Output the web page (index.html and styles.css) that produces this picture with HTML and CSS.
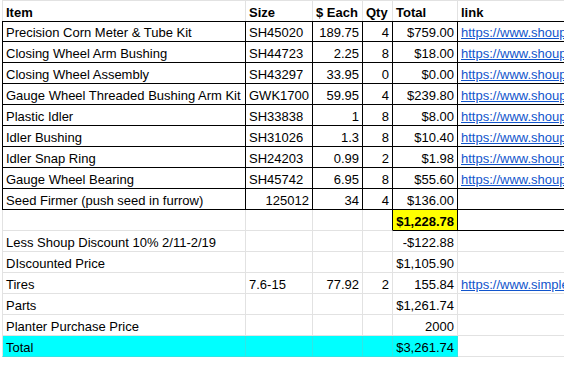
FILE: index.html
```html
<!DOCTYPE html>
<html>
<head>
<meta charset="utf-8">
<link rel="stylesheet" href="styles.css">
</head>
<body>
<div class="sheet">
  <div class="c a hd">Item</div><div class="c hd">Size</div><div class="c hd">$ Each</div><div class="c hd">Qty</div><div class="c hd">Total</div><div class="c f hd">link</div>

  <div class="c a bl bx">Precision Corn Meter &amp; Tube Kit</div><div class="c bx">SH45020</div><div class="c bx num">189.75</div><div class="c bx num">4</div><div class="c bx num">$759.00</div><div class="c f bx"><a href="#">https://www.shoup.com/precision-corn-meter</a></div>
  <div class="c a bl bx">Closing Wheel Arm Bushing</div><div class="c bx">SH44723</div><div class="c bx num">2.25</div><div class="c bx num">8</div><div class="c bx num">$18.00</div><div class="c f bx"><a href="#">https://www.shoup.com/closing-wheel-arm</a></div>
  <div class="c a bl bx">Closing Wheel Assembly</div><div class="c bx">SH43297</div><div class="c bx num">33.95</div><div class="c bx num">0</div><div class="c bx num">$0.00</div><div class="c f bx"><a href="#">https://www.shoup.com/closing-wheel-assembly</a></div>
  <div class="c a bl bx">Gauge Wheel Threaded Bushing Arm Kit</div><div class="c bx">GWK1700</div><div class="c bx num">59.95</div><div class="c bx num">4</div><div class="c bx num">$239.80</div><div class="c f bx"><a href="#">https://www.shoup.com/gauge-wheel-arm-kit</a></div>
  <div class="c a bl bx">Plastic Idler</div><div class="c bx">SH33838</div><div class="c bx num">1</div><div class="c bx num">8</div><div class="c bx num">$8.00</div><div class="c f bx"><a href="#">https://www.shoup.com/plastic-idler</a></div>
  <div class="c a bl bx">Idler Bushing</div><div class="c bx">SH31026</div><div class="c bx num">1.3</div><div class="c bx num">8</div><div class="c bx num">$10.40</div><div class="c f bx"><a href="#">https://www.shoup.com/idler-bushing</a></div>
  <div class="c a bl bx">Idler Snap Ring</div><div class="c bx">SH24203</div><div class="c bx num">0.99</div><div class="c bx num">2</div><div class="c bx num">$1.98</div><div class="c f bx"><a href="#">https://www.shoup.com/idler-snap-ring</a></div>
  <div class="c a bl bx">Gauge Wheel Bearing</div><div class="c bx">SH45742</div><div class="c bx num">6.95</div><div class="c bx num">8</div><div class="c bx num">$55.60</div><div class="c f bx"><a href="#">https://www.shoup.com/gauge-wheel-bearing</a></div>
  <div class="c a bl bx">Seed Firmer (push seed in furrow)</div><div class="c bx num">125012</div><div class="c bx num">34</div><div class="c bx num">4</div><div class="c bx num">$136.00</div><div class="c f bx"></div>

  <div class="c a"></div><div class="c"></div><div class="c"></div><div class="c br"></div><div class="c bx num yel">$1,228.78</div><div class="c f bb"></div>

  <div class="c a">Less Shoup Discount 10% 2/11-2/19</div><div class="c"></div><div class="c"></div><div class="c"></div><div class="c num">-$122.88</div><div class="c f"></div>
  <div class="c a">DIscounted Price</div><div class="c"></div><div class="c"></div><div class="c"></div><div class="c num">$1,105.90</div><div class="c f"></div>
  <div class="c a">Tires</div><div class="c">7.6-15</div><div class="c num">77.92</div><div class="c num">2</div><div class="c num">155.84</div><div class="c f"><a href="#">https://www.simpletire.com/</a></div>
  <div class="c a">Parts</div><div class="c"></div><div class="c"></div><div class="c"></div><div class="c num">$1,261.74</div><div class="c f"></div>
  <div class="c a">Planter Purchase Price</div><div class="c"></div><div class="c"></div><div class="c"></div><div class="c num">2000</div><div class="c f"></div>
  <div class="c a cy">Total</div><div class="c cy"></div><div class="c cy"></div><div class="c cy"></div><div class="c num cy">$3,261.74</div><div class="c f"></div>
</div>
</body>
</html>
```
FILE: styles.css
```css
html, body {
  margin: 0;
  padding: 0;
  background: #fff;
  overflow: hidden;
}

body {
  font-family: "Liberation Sans", Arial, sans-serif;
  font-size: 13px;
  color: #000;
}

.sheet {
  display: grid;
  grid-template-columns: 244px 67px 50px 30px 65px 106px;
  grid-auto-rows: 21px;
  margin-left: 2px;
  width: max-content;
}

.c {
  box-sizing: border-box;
  border-right: 1px solid #e2e2e2;
  border-bottom: 1px solid #e2e2e2;
  padding: 0 3px 1px 3px;
  display: flex;
  align-items: flex-end;
  white-space: nowrap;
  overflow: hidden;
  line-height: 15px;
}

.a {
  border-left: 1px solid #e2e2e2;
}

.f {
  border-right: 0;
}

.hd {
  font-weight: bold;
  border-top: 1px solid #e2e2e2;
  border-bottom-color: #000;
  height: 22px;
  align-self: start;
}

.bl {
  border-left-color: #000;
}

.bx {
  border-right-color: #000;
  border-bottom-color: #000;
}

.br {
  border-right-color: #000;
}

.bb {
  border-bottom-color: #000;
}

.num {
  justify-content: flex-end;
}

.yel {
  background: #ffff00;
  font-weight: bold;
}

.cy {
  background: #00ffff;
  border-right-color: #2fe6e6;
  border-bottom-color: #2fe6e6;
}

a {
  color: #1155cc;
  text-decoration: underline;
}
```
